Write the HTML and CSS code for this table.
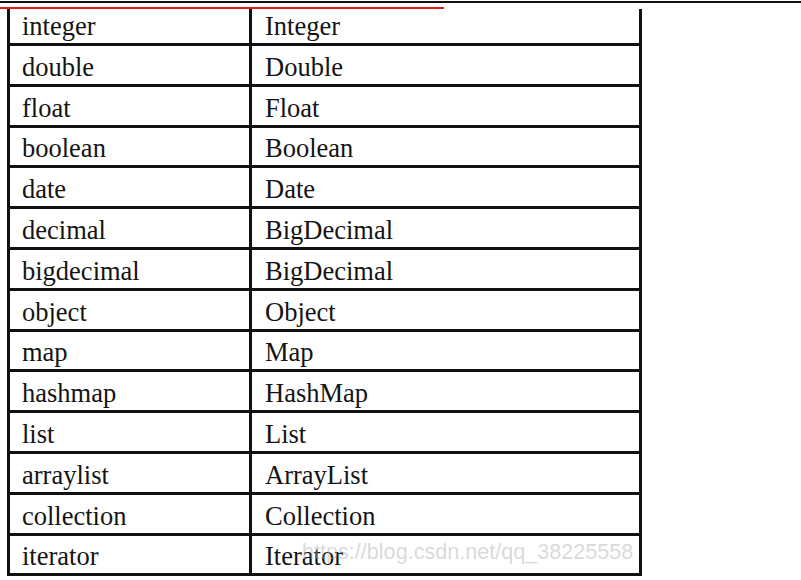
FILE: index.html
```html
<!DOCTYPE html>
<html lang="en">
<head>
<meta charset="utf-8">
<title>Type mapping</title>
<link rel="stylesheet" href="styles.css">
</head>
<body>
<div class="page">
  <div class="rule-top"></div>
  <div class="rule-red"></div>
  <div class="sheet">
    <div class="row first"><div class="cell key">integer</div><div class="cell val">Integer</div></div>
    <div class="row"><div class="cell key">double</div><div class="cell val">Double</div></div>
    <div class="row"><div class="cell key">float</div><div class="cell val">Float</div></div>
    <div class="row"><div class="cell key">boolean</div><div class="cell val">Boolean</div></div>
    <div class="row"><div class="cell key">date</div><div class="cell val">Date</div></div>
    <div class="row"><div class="cell key">decimal</div><div class="cell val">BigDecimal</div></div>
    <div class="row"><div class="cell key">bigdecimal</div><div class="cell val">BigDecimal</div></div>
    <div class="row"><div class="cell key">object</div><div class="cell val">Object</div></div>
    <div class="row"><div class="cell key">map</div><div class="cell val">Map</div></div>
    <div class="row"><div class="cell key">hashmap</div><div class="cell val">HashMap</div></div>
    <div class="row"><div class="cell key">list</div><div class="cell val">List</div></div>
    <div class="row"><div class="cell key">arraylist</div><div class="cell val">ArrayList</div></div>
    <div class="row"><div class="cell key">collection</div><div class="cell val">Collection</div></div>
    <div class="row"><div class="cell key">iterator</div><div class="cell val">Iterator</div></div>
  </div>
  <div class="watermark">https://blog.csdn.net/qq_38225558</div>
</div>
</body>
</html>
```

FILE: styles.css
```css
html, body {
  margin: 0;
  padding: 0;
  background: #ffffff;
}

.page {
  position: relative;
  width: 801px;
  height: 580px;
  overflow: hidden;
}

.rule-top {
  height: 2px;
  margin-top: 1px;
  background: #111111;
}

.rule-red {
  width: 444px;
  height: 2px;
  margin-top: 4px;
  background: #e41a1c;
}

.sheet {
  width: 629px;
  margin-left: 7px;
  border-left: 3px solid #111111;
  border-right: 3px solid #111111;
}

.row {
  display: grid;
  grid-template-columns: 242px 1fr;
  height: 40.8px;
  box-sizing: border-box;
  border-bottom: 3px solid #111111;
}

.row.first {
  height: 37px;
}

.cell {
  display: flex;
  align-items: flex-end;
  font-family: "Liberation Serif", "Times New Roman", serif;
  font-size: 26.5px;
  line-height: 26px;
  color: #141414;
  padding-bottom: 4px;
  white-space: nowrap;
}

.key {
  padding-left: 12px;
  border-right: 3px solid #111111;
}

.val {
  padding-left: 13px;
}

.watermark {
  position: absolute;
  left: 302px;
  top: 541px;
  font-family: "Liberation Sans", Arial, sans-serif;
  font-size: 21.6px;
  line-height: 21px;
  color: rgba(170, 170, 170, 0.45);
  white-space: nowrap;
}
```
